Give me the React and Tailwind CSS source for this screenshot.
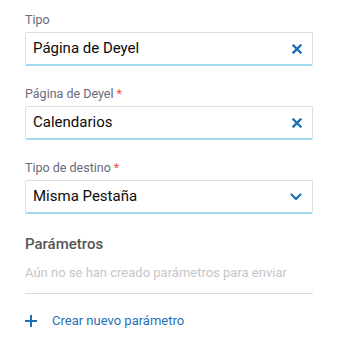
function ClearIcon() {
  return (
    <svg width="10" height="10" viewBox="0 0 10 10" className="shrink-0">
      <path d="M1.5 1.5 L8.5 8.5 M8.5 1.5 L1.5 8.5" stroke="#1f6fb7" strokeWidth="2.4" strokeLinecap="square" />
    </svg>
  );
}

function ChevronIcon() {
  return (
    <svg width="12" height="8" viewBox="0 0 12 8" className="shrink-0">
      <path d="M1.5 1.5 L6 6 L10.5 1.5" stroke="#1f6fb7" strokeWidth="2.2" fill="none" strokeLinecap="round" strokeLinejoin="round" />
    </svg>
  );
}

function Field({ label, required, value, icon }) {
  return (
    <div>
      <p className="text-[12.5px] leading-[18px] text-[#676a7c] mb-[3px]">
        {label}
        {required && <span className="text-[#ef4b4b] ml-[3px]">*</span>}
      </p>
      <div className="h-[34px] flex items-center justify-between pl-[7px] pr-[10px] bg-white border border-[#dedede] border-b-2 border-b-[#a0ddf3] rounded-[2px]">
        <span className="text-[15px] text-[#0c0c0c]">{value}</span>
        {icon === "clear" ? <ClearIcon /> : <ChevronIcon />}
      </div>
    </div>
  );
}

export default function App() {
  return (
    <div className="w-[338px] h-[350px] bg-white pl-[25px] pt-[11px]" style={{ fontFamily: "Roboto, 'Liberation Sans', sans-serif" }}>
      <div className="w-[288px] flex flex-col gap-[19px]">
        <Field label="Tipo" value="Página de Deyel" icon="clear" />
        <Field label="Página de Deyel" required value="Calendarios" icon="clear" />
        <Field label="Tipo de destino" required value="Misma Pestaña" icon="chevron" />
      </div>

      <div className="w-[288px] mt-[20px]">
        <h3 className="text-[15px] leading-[20px] font-medium text-[#555]">Parámetros</h3>
        <p className="mt-[10px] text-[13px] leading-[18px] text-[#c6c6c6]">Aún no se han creado parámetros para enviar</p>
        <div className="mt-[11px] border-t border-[#d8d8d8]" />
        <button className="mt-[18px] flex items-center text-[13px] leading-[18px] text-[#1f6fb7]">
          <svg width="12" height="12" viewBox="0 0 12 12" className="mr-[15px]">
            <path d="M6 0 V12 M0 6 H12" stroke="#1f6fb7" strokeWidth="2" />
          </svg>
          Crear nuevo parámetro
        </button>
      </div>
    </div>
  );
}
